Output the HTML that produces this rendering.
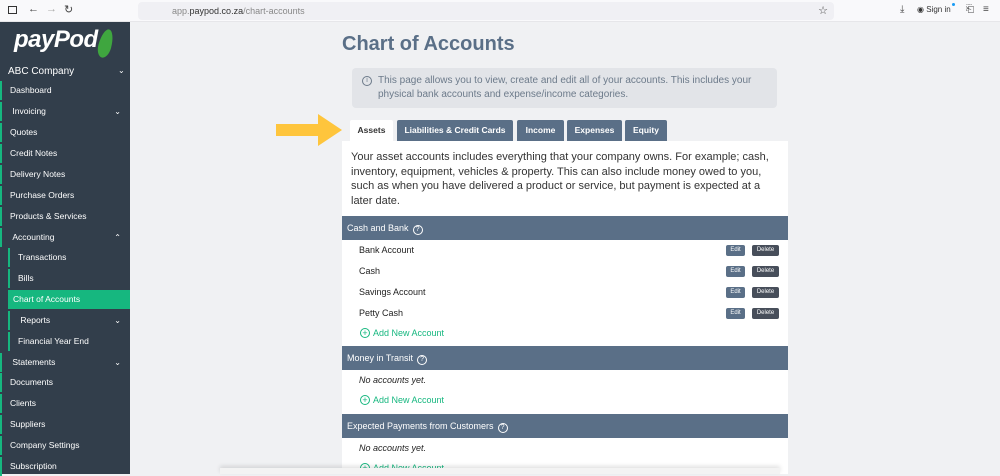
<!DOCTYPE html>
<html><head><style>
*{box-sizing:border-box;margin:0;padding:0}
body{width:1000px;height:474px;overflow:hidden;font-family:"Liberation Sans",sans-serif;background:#f0f1f3;position:relative}
.top{position:absolute;left:0;top:0;width:1000px;height:22px;background:#f9f9fb;border-bottom:1px solid #e6e6e9}
.url{position:absolute;left:138px;top:2px;width:696px;height:18px;background:#f0f0f4;border-radius:4px;font-size:9px;color:#888;line-height:18px;padding-left:34px}
.url b{color:#333;font-weight:normal}
.side{position:absolute;left:0;top:22px;width:130px;height:452px;background:#323e4b;color:#fff}
.logo{position:absolute;left:14px;top:4px;font:italic bold 24px "Liberation Sans",sans-serif;color:#fff;letter-spacing:-0.5px}
.leaf{position:absolute;left:99px;top:7px;width:13px;height:29px;background:#3fa63f;border-radius:50% 50% 50% 50%/60% 60% 40% 40%;transform:rotate(15deg)}
.co{position:absolute;left:8px;top:44px;font-size:10px}
.it{position:absolute;left:0;height:19px;width:130px;font-size:8.5px;line-height:19px;padding-left:8px;border-left:2px solid #16b77f}
.sub{left:8px;width:122px;padding-left:8px}
.act{background:#16b77f;border-left:none;left:8px;width:122px;padding-left:5px}
.chev{position:absolute;right:9px;top:0;font-size:8px}
h1{position:absolute;left:342px;top:33px;font-size:20px;color:#5a6f87;font-weight:bold}
.info{position:absolute;left:352px;top:68px;width:425px;height:40px;background:#e2e4e8;border-radius:4px;font-size:10px;color:#6c7a8a;line-height:14px;padding:6px 10px 0 26px}
.info i{position:absolute;left:10px;top:8px;width:10px;height:10px;border:1px solid #6c7a8a;border-radius:50%;font-style:normal;font-size:7px;text-align:center;line-height:8px}
.tab{position:absolute;top:120px;height:21px;background:#5a6f87;color:#fff;font-size:8.5px;font-weight:bold;text-align:center;line-height:21px;border-radius:2px 2px 0 0}
.panel{position:absolute;left:342px;top:141px;width:446px;height:333px;background:#fff}
.desc{position:absolute;left:351px;top:150px;width:426px;font-size:11px;line-height:14.5px;color:#333}
.hd{position:absolute;left:342px;width:446px;height:24px;background:#5a6f87;color:#fff;font-size:9px;line-height:24px;padding-left:5px}
.q{display:inline-block;width:10px;height:10px;border:1px solid #fff;border-radius:50%;font-size:7px;text-align:center;line-height:8px;margin-left:4px;vertical-align:0}
.row{position:absolute;left:359px;font-size:9px;color:#222}
.em{font-style:italic}
.add{position:absolute;left:360px;font-size:9px;color:#16b77f}
.add span{display:inline-block;width:10px;height:10px;border:1px solid #16b77f;border-radius:50%;text-align:center;line-height:8px;font-size:9px;margin-right:3px}
.b{position:absolute;height:11px;font-size:6px;color:#fff;line-height:11px;text-align:center;border-radius:2px}
.e{left:726px;width:19px;background:#5a6f87}
.d{left:752px;width:27px;background:#474e5a}
.arrow{position:absolute;left:276px;top:114px}
</style></head><body>
<div class="top">
<div style="position:absolute;left:8px;top:6px;width:9px;height:8px;border:1.5px solid #333"></div>
<div style="position:absolute;left:28px;top:3px;font-size:11px;color:#444">←</div>
<div style="position:absolute;left:46px;top:3px;font-size:11px;color:#aaa">→</div>
<div style="position:absolute;left:64px;top:3px;font-size:11px;color:#444">↻</div>
<div class="url">app.<b>paypod.co.za</b>/chart-accounts<span style="position:absolute;right:6px;top:0;color:#444;font-size:11px">☆</span></div>
<div style="position:absolute;left:900px;top:4px;font-size:10px;color:#444">⤓</div>
<div style="position:absolute;left:917px;top:5px;font-size:8px;color:#333">◉ Sign in</div>
<div style="position:absolute;left:952px;top:3px;width:3px;height:3px;background:#1a9cf5;border-radius:50%"></div>
<div style="position:absolute;left:966px;top:4px;font-size:10px;color:#444">⎗</div>
<div style="position:absolute;left:983px;top:4px;font-size:10px;color:#444">≡</div>
</div>
<div class="side">
<div class="logo">payPod</div><div class="leaf"></div>
<div class="co">ABC Company<span class="chev" style="right:-110px;left:110px;position:absolute">⌄</span></div>
<div class="it" style="top:59px">Dashboard</div>
<div class="it" style="top:80px">&nbsp;Invoicing<span class="chev">⌄</span></div>
<div class="it" style="top:101px">Quotes</div>
<div class="it" style="top:122px">Credit Notes</div>
<div class="it" style="top:143px">Delivery Notes</div>
<div class="it" style="top:164px">Purchase Orders</div>
<div class="it" style="top:185px">Products &amp; Services</div>
<div class="it" style="top:206px">&nbsp;Accounting<span class="chev">⌃</span></div>
<div class="it sub" style="top:226px">Transactions</div>
<div class="it sub" style="top:247px">Bills</div>
<div class="it act" style="top:268px">Chart of Accounts</div>
<div class="it sub" style="top:289px">&nbsp;Reports<span class="chev">⌄</span></div>
<div class="it sub" style="top:310px">Financial Year End</div>
<div class="it" style="top:331px">&nbsp;Statements<span class="chev">⌄</span></div>
<div class="it" style="top:351px">Documents</div>
<div class="it" style="top:372px">Clients</div>
<div class="it" style="top:393px">Suppliers</div>
<div class="it" style="top:414px">Company Settings</div>
<div class="it" style="top:435px">Subscription</div>
</div>
<h1>Chart of Accounts</h1>
<div class="info"><i>i</i>This page allows you to view, create and edit all of your accounts. This includes your physical bank accounts and expense/income categories.</div>
<svg class="arrow" width="66" height="34"><polygon points="0,10 42,10 42,0 66,16 42,32 42,22 0,22" fill="#fec53c"/></svg>
<div class="panel"></div>
<div class="tab" style="left:350px;width:43px;background:#fff;color:#333">Assets</div>
<div class="tab" style="left:397px;width:116px">Liabilities &amp; Credit Cards</div>
<div class="tab" style="left:517px;width:47px">Income</div>
<div class="tab" style="left:567px;width:55px">Expenses</div>
<div class="tab" style="left:625px;width:42px">Equity</div>
<div class="desc">Your asset accounts includes everything that your company owns. For example; cash, inventory, equipment, vehicles &amp; property. This can also include money owed to you, such as when you have delivered a product or service, but payment is expected at a later date.</div>
<div class="hd" style="top:216px">Cash and Bank<span class="q">?</span></div>
<div class="row" style="top:245px">Bank Account</div>
<div class="row" style="top:266px">Cash</div>
<div class="row" style="top:287px">Savings Account</div>
<div class="row" style="top:308px">Petty Cash</div>
<div class="b e" style="top:245px">Edit</div><div class="b d" style="top:245px">Delete</div>
<div class="b e" style="top:266px">Edit</div><div class="b d" style="top:266px">Delete</div>
<div class="b e" style="top:287px">Edit</div><div class="b d" style="top:287px">Delete</div>
<div class="b e" style="top:308px">Edit</div><div class="b d" style="top:308px">Delete</div>
<div class="add" style="top:328px"><span>+</span>Add New Account</div>
<div class="hd" style="top:346px">Money in Transit<span class="q">?</span></div>
<div class="row em" style="top:375px">No accounts yet.</div>
<div class="add" style="top:395px"><span>+</span>Add New Account</div>
<div class="hd" style="top:414px">Expected Payments from Customers<span class="q">?</span></div>
<div class="row em" style="top:443px">No accounts yet.</div>
<div class="add" style="top:463px"><span>+</span>Add New Account</div>
<div style="position:absolute;left:220px;top:468px;width:560px;height:6px;background:#f3f3f3;box-shadow:0 -2px 4px rgba(0,0,0,.12)"></div>
</body></html>
